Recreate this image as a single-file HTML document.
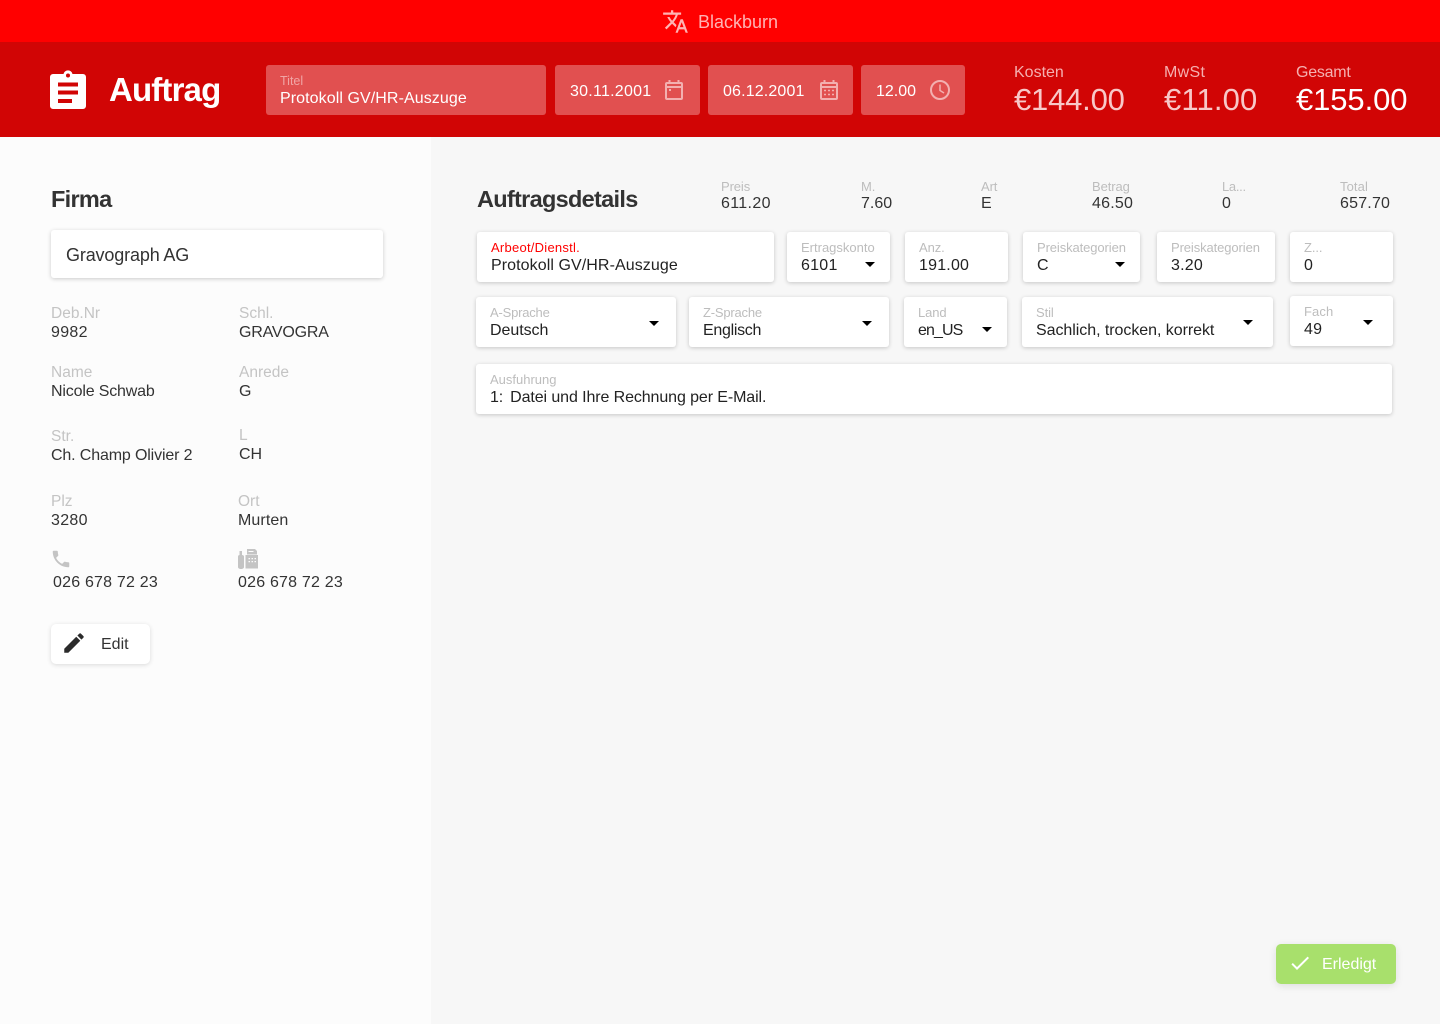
<!DOCTYPE html>
<html><head><meta charset="utf-8"><style>
*{box-sizing:border-box}
html,body{margin:0;padding:0}
body{width:1440px;height:1024px;overflow:hidden;position:relative;background:#f7f7f7;font-family:"Liberation Sans",sans-serif;color:#222}
.a{position:absolute}
.t{position:absolute;white-space:nowrap;line-height:20px;font-size:16px}
.l{color:#bdbdbd;font-size:13px;letter-spacing:-.1px}
.ll{color:#c4c4c4;font-size:15.5px;margin-top:2px}
.v{color:#333;font-size:16px;margin-top:1px}
.lv{margin-top:2px}
.d{letter-spacing:.17px}
.card{position:absolute;background:#fff;border-radius:3px;box-shadow:0 1px 4px rgba(0,0,0,.2)}
.h{position:absolute;background:#e15050;border-radius:3px;top:65px;height:50px}
.ar{position:absolute;width:0;height:0;border-left:5.5px solid transparent;border-right:5.5px solid transparent;border-top:5.5px solid #000}
.w{color:#fff}.p{color:#f5b5b5}
svg{position:absolute;display:block}
</style></head><body>
<div class="a" style="left:0;top:0;width:1440px;height:42px;background:#f00"></div>
<div class="a" style="left:0;top:42px;width:1440px;height:95px;background:#d10505"></div>
<div class="a" style="left:0;top:137px;width:431px;height:887px;background:#fcfcfc"></div>

<svg style="left:662px;top:8px" width="27" height="27" viewBox="0 0 24 24" fill="#ffb3b3"><path d="M12.87 15.07l-2.54-2.51.03-.03c1.74-1.94 2.98-4.17 3.71-6.53H17V4h-7V2H8v2H1v1.99h11.17C11.5 7.92 10.44 9.75 9 11.35 8.07 10.32 7.3 9.19 6.69 8h-2c.73 1.63 1.73 3.17 2.98 4.56l-5.09 5.02L4 19l5-5 3.11 3.11.76-2.04zM18.5 10h-2L12 22h2l1.12-3h4.75L21 22h2l-4.5-12zm-2.62 7l1.62-4.33L19.12 17h-3.24z"/></svg>
<div class="t" style="left:698px;top:12px;font-size:18px;color:#ffb3b3">Blackburn</div>

<svg style="left:50px;top:69px" width="36" height="40" viewBox="0 0 36 40"><path fill="#fff" d="M3 5h10.500a4.600 4.600 0 0 1 9 0H33a3 3 0 0 1 3 3v29a3 3 0 0 1-3 3H3a3 3 0 0 1-3-3V8a3 3 0 0 1 3-3z"/><circle cx="18" cy="6.500" r="2" fill="#d10505"/><path fill="#d10505" d="M8 13.500h20v4H8zM8 21.500h20v4H8zM8 30h14v4H8z"/></svg>
<div class="t" style="left:109px;top:70px;line-height:40px;font-size:33px;font-weight:bold;letter-spacing:-.85px;color:#fff">Auftrag</div>

<div class="h" style="left:266px;width:280px"></div>
<div class="t" style="left:280px;top:71px;font-size:12.500px;color:#f0a5a5">Titel</div>
<div class="t w" style="left:280px;top:89px;letter-spacing:.08px">Protokoll GV/HR-Auszuge</div>

<div class="h" style="left:555px;width:145px"></div>
<div class="t w" style="left:570px;top:82px;letter-spacing:.25px">30.11.2001</div>
<svg style="left:665px;top:80px" width="18" height="20" viewBox="0 0 18 20" fill="none" stroke="#f3b0b0" stroke-width="2"><rect x="1" y="3" width="16" height="16" rx="1"/><path d="M1 7h16M4.500 0v3M13.500 0v3M4 10h2" /></svg>

<div class="h" style="left:708px;width:145px"></div>
<div class="t w" style="left:723px;top:82px;letter-spacing:.15px">06.12.2001</div>
<svg style="left:820px;top:80px" width="18" height="20" viewBox="0 0 18 20" fill="none" stroke="#f3b0b0" stroke-width="2"><rect x="1" y="3" width="16" height="16" rx="1"/><path d="M1 7h16M4.500 0v3M13.500 0v3"/><path stroke-width="1.600" d="M4 10.500h2M8 10.500h2M12 10.500h2M4 14.500h2M8 14.500h2M12 14.500h2"/></svg>

<div class="h" style="left:861px;width:104px"></div>
<div class="t w" style="left:876px;top:82px">12.00</div>
<svg style="left:930px;top:80px" width="20" height="20" viewBox="0 0 20 20" fill="none" stroke="#f3b0b0" stroke-width="2"><circle cx="10" cy="10" r="9"/><path d="M10 4.500v6l4 2.500" stroke-width="1.500"/></svg>

<div class="t" style="left:1014px;top:63px;color:#f5b0b0">Kosten</div>
<div class="t" style="left:1014px;top:80px;line-height:40px;font-size:31px;color:#f8c8c8;letter-spacing:-.2px">€144.00</div>
<div class="t" style="left:1164px;top:63px;color:#f5b0b0;letter-spacing:.3px">MwSt</div>
<div class="t" style="left:1164px;top:80px;line-height:40px;font-size:31px;color:#f8c8c8;letter-spacing:.15px">€11.00</div>
<div class="t" style="left:1296px;top:63px;color:#f5b0b0;letter-spacing:-.25px">Gesamt</div>
<div class="t w" style="left:1296px;top:80px;line-height:40px;font-size:31px;letter-spacing:-.1px">€155.00</div>

<div class="t" style="left:51px;top:184px;line-height:30px;font-size:23.500px;font-weight:bold;letter-spacing:-.7px;color:#333">Firma</div>
<div class="card" style="left:51px;top:230px;width:332px;height:48px"></div>
<div class="t" style="left:66px;top:245px;font-size:18px;letter-spacing:-.15px;color:#333">Gravograph AG</div>

<div class="t ll" style="left:51px;top:302px">Deb.Nr</div><div class="t v lv" style="left:51px;top:321px;letter-spacing:.3px">9982</div>
<div class="t ll" style="left:239px;top:302px">Schl.</div><div class="t v lv" style="left:239px;top:321px;letter-spacing:-.2px">GRAVOGRA</div>
<div class="t ll" style="left:51px;top:361px">Name</div><div class="t v lv" style="left:51px;top:380px;letter-spacing:-.17px">Nicole Schwab</div>
<div class="t ll" style="left:239px;top:361px">Anrede</div><div class="t v lv" style="left:239px;top:380px">G</div>
<div class="t ll" style="left:51px;top:425px">Str.</div><div class="t v lv" style="left:51px;top:444px;letter-spacing:-.14px">Ch. Champ Olivier 2</div>
<div class="t ll" style="left:239px;top:424px">L</div><div class="t v lv" style="left:239px;top:443px">CH</div>
<div class="t ll" style="left:51px;top:490px">Plz</div><div class="t v lv" style="left:51px;top:509px;letter-spacing:.3px">3280</div>
<div class="t ll" style="left:238px;top:490px">Ort</div><div class="t v lv" style="left:238px;top:509px;letter-spacing:.1px">Murten</div>

<svg style="left:50px;top:548px" width="22" height="22" viewBox="0 0 24 24" fill="#c4c4c4"><path d="M6.620 10.790c1.440 2.830 3.760 5.140 6.590 6.590l2.200-2.200c.27-.27.67-.36 1.020-.24 1.120.37 2.330.57 3.570.57.55 0 1 .45 1 1V20c0 .55-.45 1-1 1-9.390 0-17-7.610-17-17 0-.55.45-1 1-1h3.500c.55 0 1 .45 1 1 0 1.250.2 2.450.57 3.570.11.35.03.74-.25 1.020l-2.200 2.200z"/></svg>
<svg style="left:238px;top:549px" width="20" height="20" viewBox="0 0 20 20" fill="#c4c4c4"><path d="M0 7.500c0-1 .8-1.500 1.500-1.500V2h2.500v4c1 0 2 .5 2 1.500V18c0 1-1 2-3 2s-3-1-3-2zM7.500 6h12.500v13.500H7.500zM9 0h8l2 2v3.500H9z"/><path fill="#fcfcfc" d="M10.500 9h1.500v1.300h-1.500zM13.500 9h1.500v1.300h-1.500zM16.500 9h1.500v1.300h-1.500zM10.500 12h1.500v1.300h-1.500zM13.500 12h1.500v1.300h-1.500zM16.500 12h1.500v1.300h-1.500zM10.500 2h5v1h-5z"/></svg>
<div class="t v lv" style="left:53px;top:571px;letter-spacing:.2px">026 678 72 23</div>
<div class="t v lv" style="left:238px;top:571px;letter-spacing:.2px">026 678 72 23</div>

<div class="card" style="left:51px;top:624px;width:99px;height:40px;border-radius:5px;box-shadow:0 1px 5px rgba(0,0,0,.14)"></div>
<svg style="left:61px;top:630px" width="26" height="26" viewBox="0 0 24 24" fill="#2b2b2b"><path d="M3 17.250V21h3.750L17.810 9.940l-3.750-3.750L3 17.250zM20.710 7.040c.39-.39.39-1.020 0-1.410l-2.340-2.340c-.39-.39-1.020-.39-1.410 0l-1.830 1.830 3.750 3.750 1.830-1.830z"/></svg>
<div class="t" style="left:101px;top:635px;color:#333">Edit</div>

<div class="t" style="left:477px;top:184px;line-height:30px;font-size:23.500px;font-weight:bold;letter-spacing:-.7px;color:#333">Auftragsdetails</div>
<div class="t l" style="left:721px;top:177px">Preis</div><div class="t v d" style="left:721px;top:193px;letter-spacing:.35px">611.20</div>
<div class="t l" style="left:861px;top:177px">M.</div><div class="t v" style="left:861px;top:193px">7.60</div>
<div class="t l" style="left:981px;top:177px">Art</div><div class="t v" style="left:981px;top:193px">E</div>
<div class="t l" style="left:1092px;top:177px">Betrag</div><div class="t v" style="left:1092px;top:193px;letter-spacing:.2px">46.50</div>
<div class="t l" style="left:1222px;top:177px;letter-spacing:-.3px">La...</div><div class="t v" style="left:1222px;top:193px">0</div>
<div class="t l" style="left:1340px;top:177px;letter-spacing:.1px">Total</div><div class="t v" style="left:1340px;top:193px;letter-spacing:.2px">657.70</div>

<div class="card" style="left:477px;top:232px;width:297px;height:50px"></div>
<div class="t l" style="left:491px;top:238px;color:#f00;letter-spacing:.25px">Arbeot/Dienstl.</div><div class="t" style="left:491px;top:256px;letter-spacing:.08px">Protokoll GV/HR-Auszuge</div>
<div class="card" style="left:787px;top:232px;width:103px;height:50px"></div>
<div class="t l" style="left:801px;top:238px;letter-spacing:0">Ertragskonto</div><div class="t" style="left:801px;top:256px;letter-spacing:.25px">6101</div><div class="ar" style="left:865px;top:262px"></div>
<div class="card" style="left:905px;top:232px;width:103px;height:50px"></div>
<div class="t l" style="left:919px;top:238px">Anz.</div><div class="t" style="left:919px;top:256px;letter-spacing:.2px">191.00</div>
<div class="card" style="left:1023px;top:232px;width:117px;height:50px"></div>
<div class="t l" style="left:1037px;top:238px">Preiskategorien</div><div class="t" style="left:1037px;top:256px">C</div><div class="ar" style="left:1115px;top:262px"></div>
<div class="card" style="left:1157px;top:232px;width:118px;height:50px"></div>
<div class="t l" style="left:1171px;top:238px">Preiskategorien</div><div class="t" style="left:1171px;top:256px;letter-spacing:.2px">3.20</div>
<div class="card" style="left:1290px;top:232px;width:103px;height:50px"></div>
<div class="t l" style="left:1304px;top:238px">Z...</div><div class="t" style="left:1304px;top:256px">0</div>

<div class="card" style="left:476px;top:297px;width:200px;height:50px"></div>
<div class="t l" style="left:490px;top:303px;letter-spacing:-.2px">A-Sprache</div><div class="t" style="left:490px;top:321px;letter-spacing:-.05px">Deutsch</div><div class="ar" style="left:649px;top:321px"></div>
<div class="card" style="left:689px;top:297px;width:200px;height:50px"></div>
<div class="t l" style="left:703px;top:303px;letter-spacing:-.2px">Z-Sprache</div><div class="t" style="left:703px;top:321px;letter-spacing:-.3px">Englisch</div><div class="ar" style="left:862px;top:321px"></div>
<div class="card" style="left:904px;top:297px;width:103px;height:50px"></div>
<div class="t l" style="left:918px;top:303px">Land</div><div class="t" style="left:918px;top:321px;letter-spacing:-.9px">en_US</div><div class="ar" style="left:982px;top:327px"></div>
<div class="card" style="left:1022px;top:297px;width:251px;height:50px"></div>
<div class="t l" style="left:1036px;top:303px">Stil</div><div class="t" style="left:1036px;top:321px;letter-spacing:-.05px">Sachlich, trocken, korrekt</div><div class="ar" style="left:1243px;top:320px"></div>
<div class="card" style="left:1290px;top:296px;width:103px;height:50px"></div>
<div class="t l" style="left:1304px;top:302px;letter-spacing:.1px">Fach</div><div class="t" style="left:1304px;top:320px;letter-spacing:.2px">49</div><div class="ar" style="left:1363px;top:320px"></div>

<div class="card" style="left:476px;top:364px;width:916px;height:50px"></div>
<div class="t l" style="left:490px;top:370px;letter-spacing:0">Ausfuhrung</div><div class="t" style="left:490px;top:388px;letter-spacing:-.1px">1:<span style="display:inline-block;width:7px"></span>Datei und Ihre Rechnung per E-Mail.</div>

<div class="a" style="left:1276px;top:944px;width:120px;height:40px;background:#a8e06c;border-radius:5px;box-shadow:0 2px 8px rgba(0,0,0,.1)"></div>
<svg style="left:1288px;top:951px" width="24" height="24" viewBox="0 0 24 24" fill="#fff"><path d="M9 16.170L4.830 12l-1.420 1.410L9 19 21 7l-1.410-1.410z"/></svg>
<div class="t w" style="left:1322px;top:955px">Erledigt</div>
</body></html>
